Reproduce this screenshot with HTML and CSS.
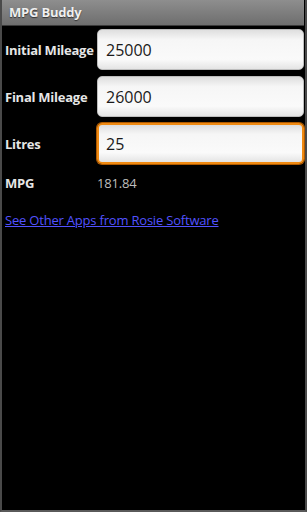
FILE: index.html
```html
<!DOCTYPE html>
<html lang="en">
<head>
    <meta charset="UTF-8">
    <meta name="viewport" content="width=device-width, initial-scale=1.0">
    <title>MPG Buddy</title>
    <link rel="stylesheet" href="styles.css">
</head>
<body>
    <div class="screen">
        <div class="title-bar">MPG Buddy</div>
        <div class="form">
            <label class="field-label" for="initial">Initial Mileage</label>
            <input class="field" type="text" id="initial" value="25000">
            <label class="field-label" for="final">Final Mileage</label>
            <input class="field" type="text" id="final" value="26000">
            <label class="field-label" for="litres">Litres</label>
            <input class="field focused" type="text" id="litres" value="25">
            <span class="field-label result-label">MPG</span>
            <span class="result">181.84</span>
        </div>
        <a class="more-link" href="#">See Other Apps from Rosie Software</a>
    </div>
</body>
</html>
```

FILE: styles.css
```css
html, body {
    margin: 0;
    padding: 0;
    background-color: #000;
}
body {
    font-family: "Open Sans", "Noto Sans", sans-serif;
    width: 307px;
    height: 512px;
    overflow: hidden;
}
.screen {
    box-sizing: border-box;
    width: 307px;
    height: 512px;
    border-left: 2px solid #4a4a4a;
    border-right: 2px solid #4a4a4a;
    border-bottom: 2px solid #5a5a5a;
    background-color: #000;
}
.title-bar {
    height: 25px;
    line-height: 24px;
    padding-left: 7px;
    background: linear-gradient(#8e8e8e, #6e6e6e);
    border-bottom: 1px solid #3a3a3a;
    color: #efefef;
    font-size: 13px;
    font-weight: bold;
    letter-spacing: -0.2px;
    text-shadow: 0 1px 1px #333;
    margin-right: 1px;
}
.form {
    display: grid;
    grid-template-columns: 90px 1fr;
    column-gap: 2px;
    row-gap: 6px;
    align-items: center;
    padding: 3px 1px 0 3px;
}
.field-label {
    color: #e6e6e6;
    font-size: 13px;
    font-weight: bold;
    letter-spacing: -0.25px;
    white-space: nowrap;
}
.field {
    box-sizing: border-box;
    height: 41px;
    width: 100%;
    margin: 0;
    padding: 0 8px;
    border: 1px solid #bdbdbd;
    border-radius: 5px;
    background: linear-gradient(#dedede, #f6f6f6 25%, #fafafa 75%, #e4e4e4);
    color: #1a1a1a;
    font-family: "Open Sans", "Noto Sans", sans-serif;
    font-size: 16px;
    outline: none;
}
.field.focused {
    border: 2px solid #f08a12;
    box-shadow: 0 0 0 1px #b05a00;
    padding-left: 7px;
}
.result-label {
    margin-top: 4px;
}
.result {
    color: #bdbdbd;
    font-size: 13px;
    letter-spacing: -0.2px;
    margin-top: 4px;
}
.more-link {
    display: block;
    margin: 19px 0 0 3px;
    color: #5252ff;
    font-size: 13px;
    letter-spacing: -0.2px;
}
```
